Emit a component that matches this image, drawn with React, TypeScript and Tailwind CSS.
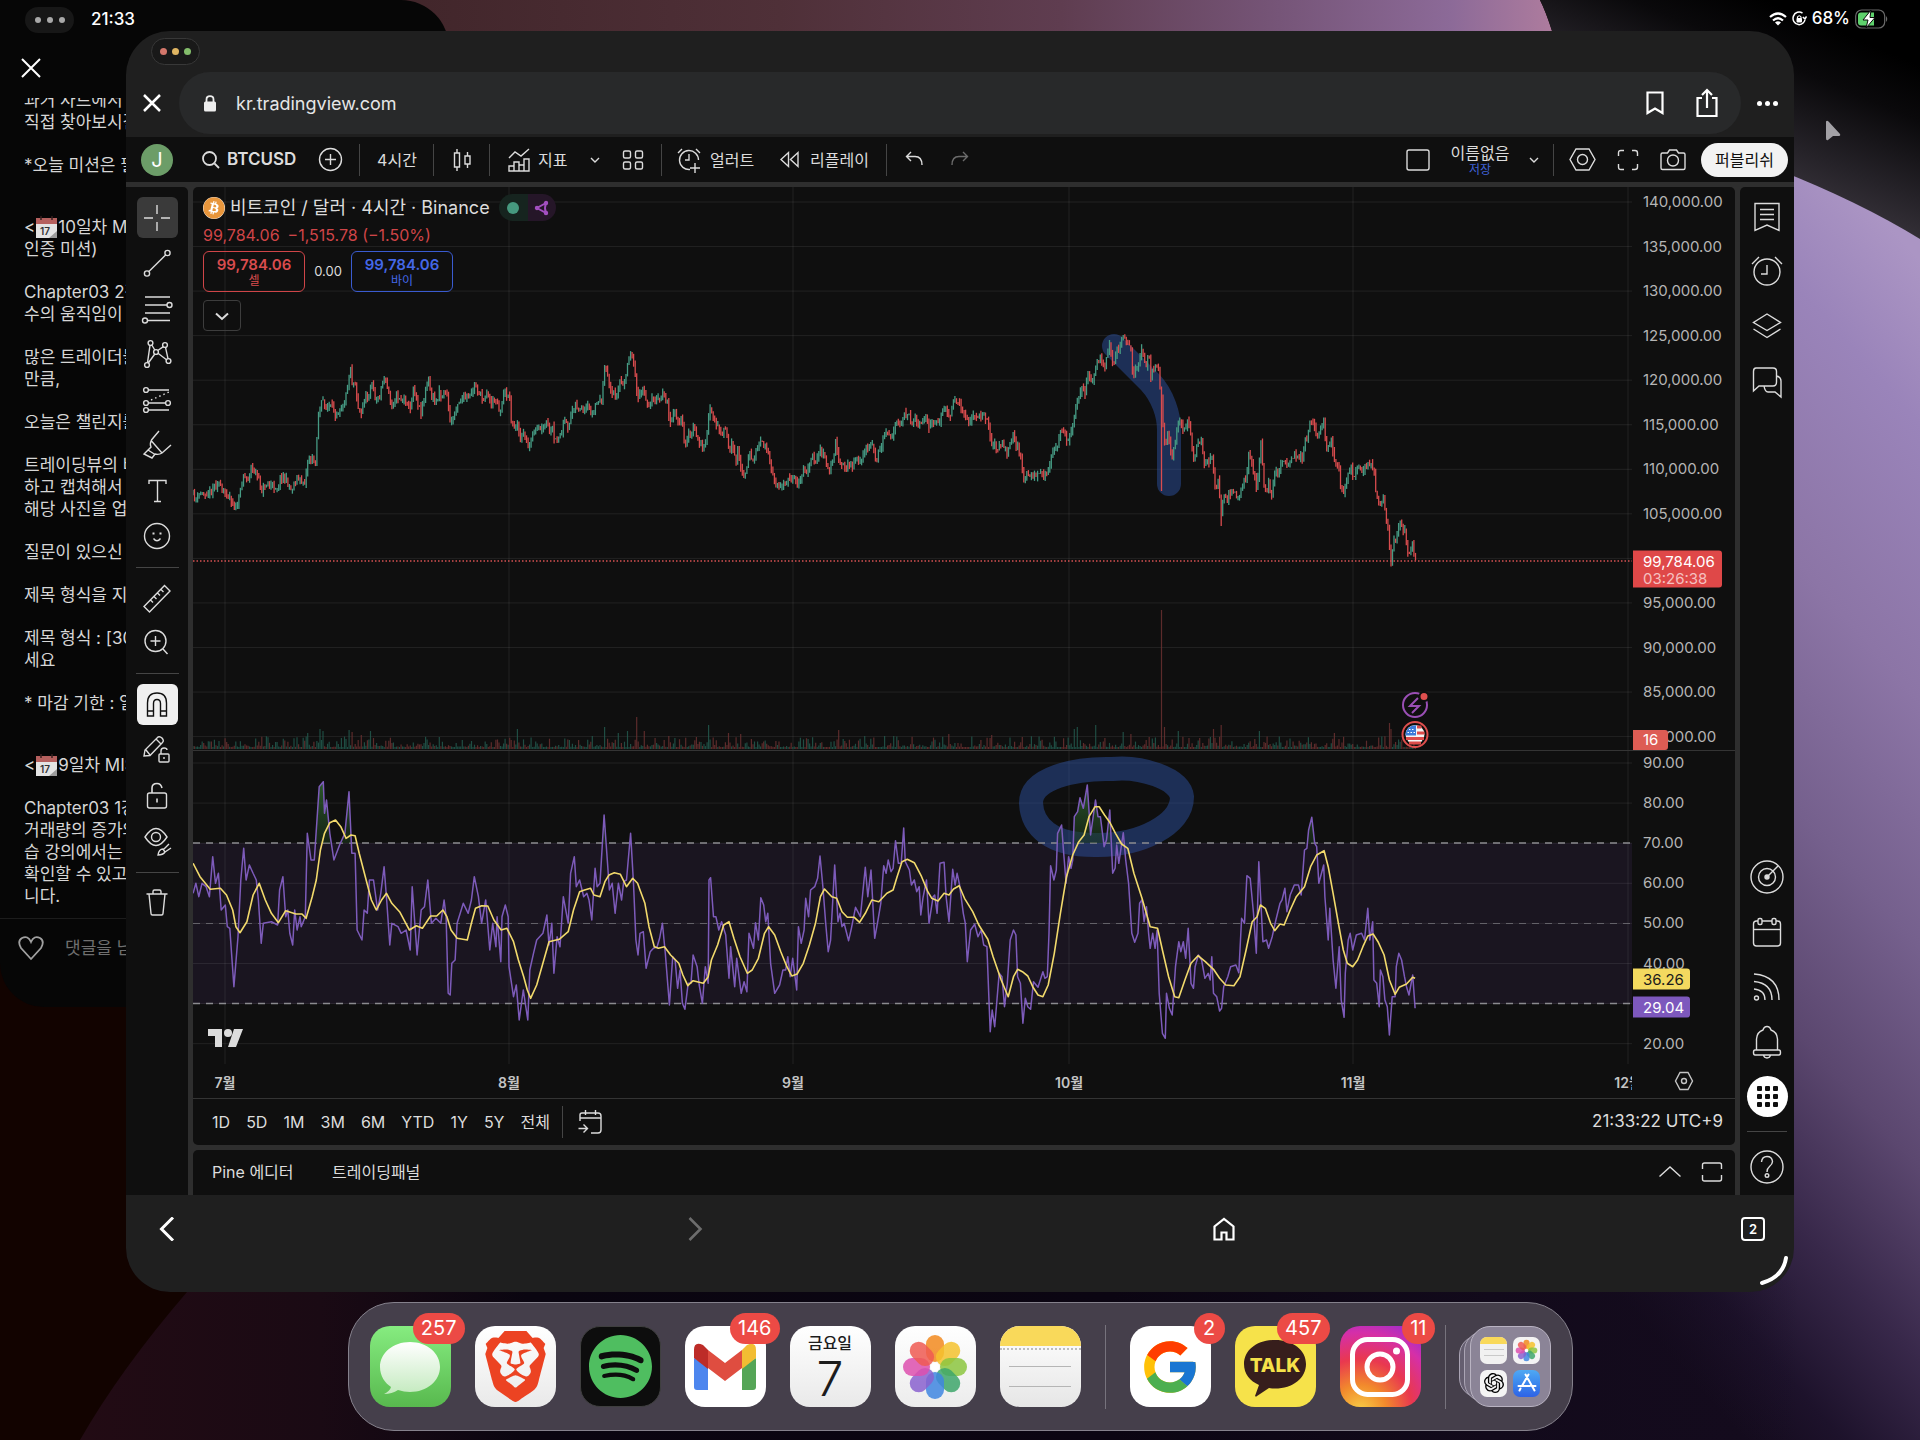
import type { ReactNode } from 'react';
import { FaBitcoin, FaSpotify } from 'react-icons/fa';
import { FcGoogle } from 'react-icons/fc';
import { SiBrave, SiOpenai } from 'react-icons/si';

type Point = [number, number];
type Leg = { ox: number; oy: number; kx: number; ky: number; pts: number[] };

// Plot area in chart units
const X0 = 193;
const Y0 = 187;
const W = 1439;
const H = 877;

// Series are stored in legs; every leg has its own origin and scale
const PRICE: Leg[] = [
  {
    ox: 190, oy: 300, kx: 3, ky: 3,
    pts: [10,585,20,598,30,580,60,580,72,555,85,548,95,575,105,575,120,590,138,630,150,580,160,522,172,542,182,503,195,515,205,540,213,572,225,556,262,560,278,522,290,545,303,568,320,538,345,545,355,468,365,480,377,482,385,345,398,298,408,325,425,320,435,342,460,310,470,280,481,195,487,252,495,240,503,320,514,345,522,300,535,290,545,250,558,300,568,290,582,227,592,260,603,315,615,290,650,300,660,336,670,264,692,336,703,290,715,244,727,295,740,305,748,268,755,300,763,262,772,285,780,370,790,350,800,310,815,295,840,295,855,254,870,280,878,303,890,272,905,312,918,290,930,340,940,285,957,278,965,370,975,390,980,352,990,422,1000,402,1018,446,1030,400,1045,385,1058,390,1068,363,1082,400,1087,380,1093,428,1105,405,1115,405,1122,363,1135,385,1145,332,1155,312,1175,340,1195,325,1210,345,1217,307,1235,300,1245,195,1255,230,1265,288,1280,275,1290,242,1300,265,1312,190,1323,155,1335,210,1343,308,1357,267,1370,316,1385,300,1405,300,1420,282,1432,310,1442,376,1457,327,1465,378,1473,357,1485,430,1497,402],
  },
  {
    ox: 640, oy: 0, kx: 2.45, ky: 3,
    pts: [122,1315,130,1288,140,1310,153,1348,162,1325,170,1220,180,1265,195,1290,215,1300,218,1385,226,1322,235,1388,240,1342,250,1430,258,1420,268,1352,278,1393,287,1350,300,1322,313,1350,320,1388,330,1445,342,1470,352,1450,365,1440,377,1432,387,1450,400,1420,415,1410,418,1372,430,1385,442,1347,455,1385,465,1418,480,1328,490,1390,513,1402,530,1380,545,1378,553,1342,565,1340,568,1327,578,1382,590,1350,598,1307,615,1308,630,1262,640,1268,648,1238,660,1255,690,1268,702,1252,710,1282,720,1262,730,1280,740,1227,750,1230,758,1262,768,1207,780,1212,795,1235,803,1265,818,1245,845,1255,855,1270,860,1342,870,1330,878,1353,887,1325,900,1362,913,1307,925,1340,935,1375,938,1436,950,1425,1000,1420,1010,1352,1020,1350,1028,1292,1040,1295,1045,1323,1060,1285,1068,1220,1080,1167,1090,1180,1097,1127,1107,1153],
  },
  {
    ox: 1000, oy: 300, kx: 3, ky: 3,
    pts: [283,225,290,185,300,175,315,205,328,132,338,193,350,160,370,107,380,135,392,130,397,218,410,200,425,152,437,195,447,162,452,228,462,200,475,202,480,280,485,300,490,390,495,448,502,395,515,476,525,430,532,380,540,352,548,385,555,395,565,357,573,400,582,488,590,430,605,430,612,480,620,495,635,465,645,560,655,540,663,640,670,590,680,600,695,580,717,590,730,532,738,540,745,472,755,482,770,568,778,480,782,425,787,480,790,556,802,578,805,547,815,578,825,517,835,515,845,495,855,477,862,503,885,470,908,470,915,412,922,420,928,372,937,355,948,395,958,403,970,362,980,440,995,422,1005,500,1015,490,1022,560,1032,592,1042,522,1055,502,1058,528,1070,510,1098,510,1108,492,1120,507,1128,578,1138,600,1140,620,1150,592,1157,658,1165,690,1170,770,1175,790,1180,722,1188,735,1197,668,1207,685,1215,692,1225,758,1237,722,1247,780],
  },
];

const RSI: Leg[] = [
  {
    ox: 0, oy: 480, kx: 2.45, ky: 3,
    pts: [473,1240,480,1210,487,1250,495,1210,505,1220,513,1250,521,1130,528,1210,535,1180,542,1290,552,1275,557,1340,563,1345,573,1520,583,1370,590,1200,597,1105,603,1200,611,1155,620,1180,628,1200,633,1260,640,1390,645,1330,665,1325,680,1335,685,1230,693,1190,700,1310,705,1290,710,1360,717,1395,722,1290,728,1350,735,1310,738,1340,748,1310,753,1060,762,1140,770,1140,782,920,792,905,795,1000,800,960,808,1060,818,1140,832,1095,845,1060,855,935,862,1120,870,1120,875,1350,887,1380,892,1290,900,1300,905,1200,915,1200,925,1290,933,1240,941,1160,948,1270,955,1395,960,1330,975,1340,983,1360,995,1350,1005,1410,1010,1220,1022,1425,1032,1290,1040,1280,1048,1200,1057,1330,1068,1315,1080,1330,1088,1260,1093,1310,1098,1540,1103,1545,1107,1450,1115,1440,1120,1330,1135,1270,1147,1300,1155,1260,1162,1190,1172,1250,1180,1330,1190,1260,1200,1410,1207,1330,1215,1400,1218,1310,1227,1445,1230,1310,1238,1275,1245,1310,1247,1460,1258,1550,1265,1515,1272,1620,1282,1530,1293,1620,1298,1470,1307,1420,1315,1380,1330,1360,1340,1305,1345,1395,1352,1330,1357,1480,1365,1370,1372,1400,1380,1250,1392,1330,1398,1180,1407,1130,1412,1220,1420,1200,1430,1250,1438,1240,1443,1260,1450,1320,1458,1165,1463,1220,1470,1210,1480,1005,1488,1140,1493,1230,1500,1210,1507,1300,1515,1210,1523,1260,1528,1205,1535,1200,1545,1060,1552,1210,1558,1380,1563,1425],
  },
  {
    ox: 640, oy: 700, kx: 2.45, ky: 3,
    pts: [0,700,8,695,15,805,25,755,33,745,42,740,48,715,55,670,62,760,72,915,80,770,86,780,92,865,98,810,104,910,110,928,118,850,125,850,130,765,140,800,145,855,153,910,160,800,167,850,169,540,173,533,180,650,186,650,193,690,200,665,210,705,218,835,222,740,232,860,237,775,248,880,255,845,262,875,267,700,278,745,283,668,290,720,296,593,303,615,308,665,313,640,320,790,330,880,342,855,350,810,357,810,362,770,368,830,374,775,384,870,388,680,395,730,402,690,406,595,413,650,418,570,428,560,435,535,441,468,448,560,455,670,461,755,467,720,477,495,485,665,490,640,495,680,500,670,511,722,518,685,528,622,540,650,552,502,558,590,566,510,575,715,583,660,590,610,597,497,603,520,608,480,615,515,620,505,626,422,633,490,640,490,646,384,650,485,660,510,665,555,672,540,678,575,684,560,688,645,693,595,702,540,708,670,718,590,722,585,728,640,735,490,745,487,750,590,757,665,766,508,772,555,777,520,783,555,792,640,797,670,802,785,810,690,820,673,828,710,836,690,842,735,850,740,858,995,863,930,869,980,875,895,880,820,887,830,893,920,900,850,907,720,915,690,921,705,925,830,932,850,938,970,944,895,950,920,957,928,964,845,975,862,987,815,992,835,998,830,1002,700,1006,497,1014,540,1020,510,1023,400,1033,375,1038,460,1044,550,1050,470,1056,505,1060,480,1064,350,1072,335,1078,293,1086,325,1096,255,1104,405,1116,300,1122,350,1128,350,1137,440,1143,420,1151,330,1158,520,1164,505,1168,435,1173,490,1184,398,1190,480,1197,550,1205,700,1212,727,1220,700,1224,610,1230,600,1235,665,1241,620,1246,700,1250,745,1256,700,1262,745,1267,690,1272,880,1280,1000,1287,1015,1290,880,1297,925,1304,945,1312,800,1320,725,1325,755,1331,725,1337,775,1343,685,1350,850,1356,865,1360,800,1368,765,1376,780,1384,835,1392,820,1397,840,1401,770,1405,880,1413,890,1420,933,1425,925,1430,860,1440,830,1447,800,1460,795,1467,818,1474,655,1481,670,1487,527,1495,535,1503,640,1510,760,1516,485,1526,725,1535,720,1540,745,1549,710,1558,660,1568,610],
  },
  {
    ox: 1280, oy: 480, kx: 2.45, ky: 3,
    pts: [5,1260,12,1225,17,1295,25,1245,35,1215,45,1215,52,1245,60,1110,66,1105,70,1050,78,1012,85,1090,90,1100,95,1210,107,1155,110,1250,118,1380,122,1285,130,1440,137,1525,145,1400,150,1560,157,1612,160,1480,167,1380,172,1360,178,1410,187,1365,200,1360,207,1380,215,1285,220,1380,227,1325,230,1500,237,1510,243,1580,246,1470,252,1490,257,1560,263,1580,268,1665,275,1550,282,1550,285,1460,291,1420,298,1440,305,1490,310,1520,316,1545,325,1485,331,1585],
  },
];

const RSI_MA: Leg[] = [
  {
    ox: 0, oy: 480, kx: 2.45, ky: 3,
    pts: [473,1150,490,1190,515,1228,540,1225,555,1245,570,1290,578,1340,588,1358,605,1325,620,1245,635,1210,650,1260,665,1300,682,1328,700,1292,725,1302,740,1302,750,1315,765,1250,775,1200,785,1110,795,1060,808,1028,822,1020,835,1040,848,1075,860,1065,870,1067,880,1120,895,1190,910,1260,922,1290,935,1260,947,1240,960,1270,980,1297,992,1325,1003,1350,1020,1337,1035,1345,1055,1308,1070,1308,1085,1290,1095,1310,1105,1350,1120,1375,1145,1380,1155,1330,1165,1285,1180,1277,1195,1278,1210,1320,1228,1350,1242,1345,1258,1385,1270,1440,1283,1490,1292,1530,1300,1555,1315,1515,1330,1450,1345,1385,1370,1378,1392,1355,1405,1290,1420,1235,1432,1230,1447,1225,1455,1245,1470,1250,1482,1205,1492,1185,1505,1178,1520,1183,1535,1220,1550,1195,1562,1210],
  },
  {
    ox: 640, oy: 700, kx: 2.45, ky: 3,
    pts: [0,570,12,610,22,680,35,740,45,745,60,740,75,765,95,790,105,825,117,857,130,842,155,850,167,830,175,780,190,735,205,675,218,665,230,715,245,770,263,820,275,810,290,775,305,700,315,680,330,705,345,755,360,800,372,828,385,822,400,790,415,735,430,670,442,590,452,567,470,590,482,595,495,635,508,652,525,652,538,667,552,640,568,600,585,605,605,580,620,570,630,530,642,485,655,478,672,488,690,530,705,575,715,595,730,603,745,580,757,585,768,567,782,557,795,595,815,635,830,675,852,718,865,770,885,840,902,890,915,830,925,808,937,815,950,828,962,860,975,885,987,890,1000,855,1015,760,1030,640,1045,530,1060,465,1075,425,1088,405,1100,350,1115,320,1125,320,1138,345,1150,365,1165,400,1180,432,1195,445,1210,520,1230,595,1250,680,1268,685,1280,750,1295,830,1310,890,1320,893,1335,840,1350,790,1367,767,1385,785,1405,808,1420,835,1435,855,1455,857,1470,830,1485,750,1500,665,1512,650,1520,615,1532,625,1545,670,1555,692,1568,672],
  },
  {
    ox: 1280, oy: 480, kx: 2.45, ky: 3,
    pts: [10,1335,25,1290,40,1250,60,1220,75,1160,90,1125,108,1112,118,1160,130,1240,143,1330,155,1410,165,1450,178,1460,190,1440,203,1400,215,1368,228,1362,240,1385,255,1425,268,1500,282,1543,292,1522,310,1512,325,1492,331,1495],
  },
];

const unpack = (legs: Leg[]): Point[] =>
  legs.flatMap(({ ox, oy, kx, ky, pts }) => {
    const out: Point[] = [];
    for (let i = 0; i < pts.length; i += 2) out.push([ox + pts[i] / kx, oy + pts[i + 1] / ky]);
    return out;
  });

const toPath = (pts: Point[]) => 'M' + pts.map(([x, y]) => `${x.toFixed(1)} ${y.toFixed(1)}`).join('L');

const sampler = (pts: Point[]) => (x: number) => {
  let i = 1;
  while (i < pts.length - 1 && pts[i][0] < x) i++;
  const [xa, ya] = pts[i - 1];
  const [xb, yb] = pts[i];
  const t = Math.min(1, Math.max(0, (x - xa) / (xb - xa || 1)));
  return ya + (yb - ya) * t;
};

// Small seeded generator, so the bars never jump between renders
let seed = 11;
const rand = () => {
  seed = (seed * 16807) % 2147483647;
  return seed / 2147483647;
};

const VOLUME_PEAKS: Point[] = [
  [308, 16], [320, 20], [323, 18], [349, 19], [352, 17], [362, 14], [370, 18], [517, 20], [605, 22], [618, 16], [627, 18],
  [636, 32], [645, 18], [669, 13], [709, 24], [729, 16], [740, 15], [838, 19], [884, 13], [949, 15], [991, 14], [1023, 12],
  [1075, 20], [1077, 22], [1096, 24], [1123, 17], [1131, 15], [1162, 139], [1164, 22], [1178, 18], [1214, 20], [1221, 24],
  [1260, 18], [1334, 16], [1389, 26], [1391, 20],
];

const CANDLE_STEP = 1.53;

const candles = (() => {
  const at = sampler(unpack(PRICE));
  const list = [];
  let open = at(X0);
  for (let x = X0; x <= 1416; x += CANDLE_STEP) {
    const close = at(x) + (rand() - 0.5) * 7;
    const volume = 2 + Math.pow(rand(), 3) * 11;
    list.push({ x, open, close, high: Math.min(open, close) - rand() * 5, low: Math.max(open, close) + rand() * 5, volume });
    open = close;
  }
  for (const [px, h] of VOLUME_PEAKS) list[Math.round((px - X0) / CANDLE_STEP)].volume = h;
  // flash crash wick
  list[Math.round((1161.5 - X0) / CANDLE_STEP)].low = 491;
  list[Math.round((1221 - X0) / CANDLE_STEP)].low = 526;
  return list;
})();

const rsiPoints = unpack(RSI);
const rsiPath = toPath(rsiPoints);
const maPath = toPath(unpack(RSI_MA));

const priceTicks = Array.from({ length: 13 }, (_, i) => ({ value: 140000 - i * 5000, y: 202 + i * 44.55 }));
const rsiTicks = Array.from({ length: 8 }, (_, i) => ({ value: 90 - i * 10, y: 763 + i * 40.1 }));
const months = [
  { label: '7월', x: 225 },
  { label: '8월', x: 509 },
  { label: '9월', x: 793 },
  { label: '10월', x: 1069 },
  { label: '11월', x: 1353 },
  { label: '12월', x: 1628 },
];

const pctY = (y: number) => `${((y - Y0) / H) * 100}%`;
const pctX = (x: number) => `${((x - X0) / W) * 100}%`;
const money = (n: number) => n.toLocaleString('en-US', { minimumFractionDigits: 2 });

function Glyph({ size = 34, box = 34, children, className = '' }: { size?: number; box?: number; children: ReactNode; className?: string }) {
  return (
    <svg width={size} height={size} viewBox={`0 0 ${box} ${box}`} fill="none" stroke="currentColor" strokeWidth="1.4" className={`shrink-0 ${className}`} aria-hidden="true">
      {children}
    </svg>
  );
}

function Wallpaper() {
  return (
    <svg className="absolute inset-0 h-full w-full" viewBox="0 0 1920 1440" preserveAspectRatio="none" aria-hidden="true">
      <defs>
        <linearGradient id="w-top" x1="0" x2="1">
          <stop offset="0.22" stopColor="#3f2428" />
          <stop offset="0.5" stopColor="#4f3038" />
          <stop offset="0.68" stopColor="#5f3d50" />
          <stop offset="0.82" stopColor="#765578" />
          <stop offset="0.93" stopColor="#8c6a98" />
          <stop offset="1" stopColor="#b07d9e" />
        </linearGradient>
        <linearGradient id="w-dark" gradientUnits="userSpaceOnUse" x1="1860" y1="40" x2="1780" y2="230">
          <stop offset="0" stopColor="#000" />
          <stop offset="0.25" stopColor="#0a090b" />
          <stop offset="0.6" stopColor="#252228" />
          <stop offset="1" stopColor="#453f48" />
        </linearGradient>
        <linearGradient id="w-purple" x1="0.8" y1="0" x2="0.4" y2="0.88">
          <stop offset="0" stopColor="#ab95c4" />
          <stop offset="0.12" stopColor="#9a84ba" />
          <stop offset="0.32" stopColor="#8c75a6" />
          <stop offset="0.5" stopColor="#75608d" />
          <stop offset="0.66" stopColor="#5b476f" />
          <stop offset="0.8" stopColor="#38284a" />
          <stop offset="0.92" stopColor="#1d122b" />
          <stop offset="1" stopColor="#140b1d" />
        </linearGradient>
        <linearGradient id="w-floor" gradientUnits="userSpaceOnUse" x1="80" y1="0" x2="1800" y2="0">
          <stop offset="0" stopColor="#220b14" />
          <stop offset="0.14" stopColor="#1a0a14" />
          <stop offset="0.26" stopColor="#0a0510" />
          <stop offset="0.6" stopColor="#0b0512" />
          <stop offset="0.82" stopColor="#120a1b" />
          <stop offset="1" stopColor="#140b1d" stopOpacity="0" />
        </linearGradient>
      </defs>
      <rect width="1920" height="1440" fill="#120300" />
      <path d="M0 0H1540Q1546 12 1552 31L1560 60H0Z" fill="url(#w-top)" />
      <path d="M1540 0H1920V320H1600L1552 31Q1546 12 1540 0Z" fill="url(#w-dark)" />
      <path d="M1700 142Q1830 184 1920 239V1440H1400V142Z" fill="url(#w-purple)" />
      <path d="M187 1292Q120 1370 80 1440H1800V1280H200Z" fill="url(#w-floor)" />
    </svg>
  );
}

function StatusBar() {
  return (
    <header className="relative flex h-[31px] items-end justify-between pl-[25px] pr-[32px] text-[17px] font-medium text-white">
      <div className="-mb-[2px] flex items-center gap-[17px]">
        <div className="flex h-[26px] w-[49px] items-center justify-center gap-[6px] rounded-full bg-[#171717]">
          <span className="size-[6px] rounded-full bg-[#a9a9a9]" />
          <span className="size-[6px] rounded-full bg-[#a9a9a9]" />
          <span className="size-[6px] rounded-full bg-[#a9a9a9]" />
        </div>
        <span>21:33</span>
      </div>
      <div className="flex h-6 items-center gap-[5px]">
        <svg width="18" height="14" viewBox="0 0 18 14" aria-hidden="true">
          <g fill="none" stroke="#fff" strokeWidth="2.2">
            <path d="M1 5Q9 -2 17 5" />
            <path d="M4 8.500Q9 4 14 8.500" />
          </g>
          <path d="M9 13.500L6 10.500Q9 8 12 10.500Z" fill="#fff" />
        </svg>
        <svg width="15" height="16" viewBox="0 0 15 16" aria-hidden="true">
          <path d="M10.500 2.200A6 6.300 0 1 0 13 6.500M14.500 5.500L13 8L10.800 6" fill="none" stroke="#fff" strokeWidth="1.500" />
          <rect x="4.500" y="7" width="5.500" height="4.500" rx="1" fill="#fff" />
          <path d="M5.500 7.500V6Q7.200 3.500 9 6V7.500" fill="none" stroke="#fff" strokeWidth="1.200" />
        </svg>
        <span>68%</span>
        <svg width="33" height="20" viewBox="0 0 33 20" aria-hidden="true">
          <rect x="0.700" y="1" width="29" height="18" rx="6" fill="none" stroke="#6b6b6b" strokeWidth="1.200" />
          <path d="M6 3.500H19V16.500H6Q3 16.500 3 13.500V6.500Q3 3.500 6 3.500Z" fill="#5ed16c" />
          <path d="M31 7V13Q33.500 10 31 7Z" fill="#6b6b6b" />
          <path d="M16 1L8 11H13L11 19L20 8.500H15Z" fill="#fff" stroke="#0a0a0a" strokeWidth="1" />
        </svg>
      </div>
    </header>
  );
}

function CalendarEmoji() {
  return (
    <svg width="21" height="22" viewBox="0 0 21 22" className="mx-px inline-block align-top" aria-hidden="true">
      <path d="M0 2H21V22H0Z" fill="#e3e3e3" />
      <path d="M0 2H21V8H0Z" fill="#b5605e" />
      <path d="M5 0V4M16 0V4" stroke="#3a2020" strokeWidth="1.500" />
      <path d="M21 15V22H13Z" fill="#9b9b9b" />
      <text x="4" y="19" fontSize="10" fontWeight="600" fill="#333">17</text>
    </svg>
  );
}

const NOTES: { lines: ReactNode[]; far?: boolean }[] = [
  { lines: ['과거 차트에서', '직접 찾아보시길'] },
  { lines: ['*오늘 미션은 필수'], far: true },
  { lines: [<><span>&lt;</span><CalendarEmoji />10일차 MISSION</>, '인증 미션)'] },
  { lines: ['Chapter03 2강', '수의 움직임이 '] },
  { lines: ['많은 트레이더들', '만큼,'] },
  { lines: ['오늘은 챌린지를'] },
  { lines: ['트레이딩뷰의 비', '하고 캡쳐해서 ', '해당 사진을 업로드'] },
  { lines: ['질문이 있으신 분'] },
  { lines: ['제목 형식을 지켜'] },
  { lines: ['제목 형식 : [30일', '세요'] },
  { lines: ['* 마감 기한 : 일요일'], far: true },
  { lines: [<><span>&lt;</span><CalendarEmoji />9일차 MISSION</>] },
  { lines: ['Chapter03 1강', '거래량의 증가와', '습 강의에서는 ', '확인할 수 있고', '니다.'] },
];

function NotesWindow() {
  return (
    <aside className="absolute left-0 top-0 flex h-[1007px] w-[449px] flex-col overflow-hidden rounded-bl-[44px] rounded-tr-[48px] bg-[#060606] text-[17px] leading-[22px] text-[#d6d6d6]">
      <button className="ml-[19px] mt-[56px] w-6 text-white" aria-label="닫기">
        <Glyph size={24} box={24}>
          <path d="M3 3L21 21M21 3L3 21" strokeWidth="2" />
        </Glyph>
      </button>
      <article className="mt-[18px] h-[820px] shrink-0 overflow-hidden pl-6">
        <div className="-mt-[9px]">
          {NOTES.map((note, i) => (
            <p key={i} className={note.far ? 'mb-[40px]' : 'mb-[21px]'}>
              {note.lines.map((line, j) => (
                <span key={j} className="block h-[22px] whitespace-nowrap">{line}</span>
              ))}
            </p>
          ))}
        </div>
      </article>
      <div className="flex items-center gap-[21px] border-t border-[#1c1c1c] pl-[18px] pt-[16px] text-[#6f6f6f]">
        <Glyph size={26} box={26} className="text-[#a0a0a0]">
          <path d="M13 24L3 13Q-1 6 4 3Q10 0 13 7Q16 0 22 3Q27 6 23 13Z" strokeWidth="1.800" />
        </Glyph>
        <span className="whitespace-nowrap">댓글을 남겨주세요</span>
      </div>
    </aside>
  );
}

function Separator() {
  return <span className="h-[32px] w-px shrink-0 bg-[#454545]" />;
}

function BrowserHeader() {
  return (
    <div className="bg-[#1f1f1f]">
      <div className="flex h-[41px] items-start pl-[25px] pt-[7px]">
        <div className="flex h-[27px] w-[49px] items-center justify-center gap-[5px] rounded-full border border-[#383838] bg-[#191919]">
          <span className="size-[7px] rounded-full bg-[#d4776b]" />
          <span className="size-[7px] rounded-full bg-[#e0b562]" />
          <span className="size-[7px] rounded-full bg-[#83bd6b]" />
        </div>
      </div>
      <div className="flex h-[65px] items-center pb-[3px]">
        <button className="ml-[15px] w-[22px] text-white" aria-label="탭 닫기">
          <Glyph size={22} box={22}>
            <path d="M3 3L19 19M19 3L3 19" strokeWidth="2.500" />
          </Glyph>
        </button>
        <div className="ml-[16px] flex h-[62px] flex-1 items-center rounded-full bg-[#28292a] pl-[24px] pr-[19px] text-white">
          <svg width="14" height="17" viewBox="0 0 14 17" aria-hidden="true">
            <rect x="1" y="6.500" width="12" height="10" rx="1.500" fill="#eee" />
            <path d="M3.500 7V4.500Q3.500 1.200 7 1.200T10.500 4.500V7" fill="none" stroke="#eee" strokeWidth="1.800" />
          </svg>
          <input className="ml-[19px] flex-1 bg-transparent text-[18px] text-[#e6e6e6] outline-none" aria-label="주소" defaultValue="kr.tradingview.com" />
          <button aria-label="북마크">
            <Glyph size={30} box={30}>
              <path d="M7.500 4.500H22.500V25L15 20.500L7.500 25Z" strokeWidth="2.200" />
            </Glyph>
          </button>
          <button className="ml-[22px]" aria-label="공유">
            <Glyph size={30} box={30}>
              <path d="M10 10H5.500V28H24.500V10H20M15 20V2.500M10 7L15 2L20 7" strokeWidth="2.200" />
            </Glyph>
          </button>
        </div>
        <button className="ml-[15px] mr-[16px] flex w-[22px] justify-center gap-[3px]" aria-label="더보기">
          <span className="size-[5px] rounded-full bg-white" />
          <span className="size-[5px] rounded-full bg-white" />
          <span className="size-[5px] rounded-full bg-white" />
        </button>
      </div>
    </div>
  );
}

function TopToolbar() {
  return (
    <div className="flex h-[45px] items-center bg-[#0f0f0f] text-base text-[#dcdcdc]">
      <button className="ml-[15px] size-8 rounded-full bg-[#6c9d68] text-[20px] leading-8 text-white">J</button>
      <button className="ml-[28px] flex w-[97px] items-center gap-[6px] text-[17px] font-semibold">
        <Glyph size={20} box={20}>
          <circle cx="8.500" cy="8.500" r="6.500" strokeWidth="1.800" />
          <path d="M13.500 13.500L18 18" strokeWidth="1.800" />
        </Glyph>
        BTCUSD
      </button>
      <button className="ml-[20px]" aria-label="심볼 비교">
        <Glyph size={25} box={25}>
          <circle cx="12.500" cy="12.500" r="11" />
          <path d="M12.500 7V18M7 12.500H18" />
        </Glyph>
      </button>
      <span className="w-[16px]" />
      <Separator />
      <button className="ml-[17px] w-[40px] whitespace-nowrap">4시간</button>
      <span className="w-[16px]" />
      <Separator />
      <button className="ml-[16px]" aria-label="캔들">
        <Glyph size={24} box={24}>
          <path d="M4.500 5H9.500V19H4.500ZM7 1V5M7 19V23M15 8H20V16H15ZM17.500 4V8M17.500 16V20" />
        </Glyph>
      </button>
      <span className="w-[15px]" />
      <Separator />
      <button className="ml-[17px] flex w-[62px] items-center gap-[7px] whitespace-nowrap">
        <Glyph size={24} box={24}>
          <path d="M2 10L8 4L14 8L22 1M2 23V18H7V23ZM7 23V14H12V23M12 17H17V23M17 23V11H22V23ZM2 23H22" />
        </Glyph>
        지표
      </button>
      <button className="ml-[18px]" aria-label="지표 즐겨찾기">
        <Glyph size={16} box={16}>
          <path d="M4 6L8 10L12 6" />
        </Glyph>
      </button>
      <button className="ml-[18px]" aria-label="템플릿">
        <Glyph size={24} box={24}>
          <rect x="2.500" y="3" width="7" height="7" rx="1.500" />
          <rect x="14.500" y="3" width="7" height="7" rx="1.500" />
          <rect x="2.500" y="14" width="7" height="7" rx="1.500" />
          <rect x="14.500" y="14" width="7" height="7" rx="1.500" />
        </Glyph>
      </button>
      <span className="w-[16px]" />
      <Separator />
      <button className="ml-[14px] flex w-[79px] items-center gap-[8px] whitespace-nowrap">
        <Glyph size={26} box={26}>
          <path d="M14 22.500A9.500 9.500 0 1 1 22.500 13M13 7V13H9M19 16V26M14 21H24M2 6L6 2M20 2L24 6" />
        </Glyph>
        얼러트
      </button>
      <button className="ml-[23px] flex w-[91px] items-center gap-[9px] whitespace-nowrap">
        <Glyph size={23} box={23}>
          <path d="M10.500 4.500V18.500L3 11.500ZM20 4.500V18.500L12.500 11.500Z" />
        </Glyph>
        리플레이
      </button>
      <span className="w-[17px]" />
      <Separator />
      <button className="ml-[16px]" aria-label="실행취소">
        <Glyph size={23} box={23}>
          <path d="M8 4L3.500 8.500L8 13M3.500 8.500H12Q19 8.500 19 17" />
        </Glyph>
      </button>
      <button className="ml-[22px] text-[#6b6b6b]" aria-label="다시실행">
        <Glyph size={23} box={23}>
          <path d="M15 4L19.500 8.500L15 13M19.500 8.500H11Q4 8.500 4 17" />
        </Glyph>
      </button>
      <div className="ml-auto flex items-center">
        <button aria-label="레이아웃">
          <Glyph size={26} box={26}>
            <rect x="2" y="3" width="22" height="20" rx="2" />
          </Glyph>
        </button>
        <button className="ml-[18px] w-[62px] whitespace-nowrap pt-px text-center leading-[20px]">
          이름없음
          <span className="block text-[12px] leading-[14px] text-[#3f62d8]">저장</span>
        </button>
        <button className="ml-[15px] mr-[11px]" aria-label="레이아웃 메뉴">
          <Glyph size={16} box={16}>
            <path d="M4 6L8 10L12 6" />
          </Glyph>
        </button>
        <Separator />
        <button className="ml-[15px]" aria-label="설정">
          <Glyph size={27} box={27}>
            <path d="M7 3H20L26 13.500L20 24H7L1 13.500Z" />
            <circle cx="13.500" cy="13.500" r="5" />
          </Glyph>
        </button>
        <button className="ml-[20px]" aria-label="전체화면">
          <Glyph size={24} box={24}>
            <path d="M2.500 8V5Q2.500 2.500 5 2.500H8M16 2.500H19Q21.500 2.500 21.500 5V8M21.500 16V19Q21.500 21.500 19 21.500H16M8 21.500H5Q2.500 21.500 2.500 19V16" />
          </Glyph>
        </button>
        <button className="ml-[19px]" aria-label="스냅샷">
          <Glyph size={28} box={28}>
            <path d="M3.500 7H8.500L10.500 4H17.500L19.500 7H24.500Q26 7 26 8.500V22Q26 23.500 24.500 23.500H3.500Q2 23.500 2 22V8.500Q2 7 3.500 7Z" />
            <circle cx="14" cy="14.500" r="5.500" />
          </Glyph>
        </button>
        <button className="ml-[14px] mr-[6px] h-[34px] w-[87px] whitespace-nowrap rounded-full bg-[#f2f2f2] text-[#0f0f0f]">퍼블리쉬</button>
      </div>
    </div>
  );
}

type Tool = { label: string; art: ReactNode; active?: 'dark' | 'light' };

const DRAW_TOOLS: Tool[] = [
  { label: '십자선', active: 'dark', art: <path d="M17 4V13M17 21V30M4 17H13M21 17H30" /> },
  { label: '추세선', art: <><circle cx="27.500" cy="7" r="2.600" /><circle cx="7" cy="27.500" r="2.600" /><path d="M25.600 8.900L8.900 25.600" /></> },
  { label: '피보나치', art: <><path d="M5 5H30M5 13H27M5 21H30M8 28.500H30" /><circle cx="29.500" cy="13" r="2.500" /><circle cx="5" cy="28.500" r="2.500" /></> },
  { label: '패턴', art: <><circle cx="10.500" cy="6" r="2.400" /><circle cx="25" cy="8" r="2.400" /><circle cx="16" cy="15" r="2.400" /><circle cx="7" cy="28" r="2.400" /><circle cx="28.500" cy="24" r="2.400" /><path d="M10 8.400L7.500 25.600M11.800 8L14.800 13M18 16.300L26.500 22.700M14.800 17L8.300 26M23.300 9.700L17.800 13.500M25.500 10.400L28 21.600" /></> },
  { label: '예측', art: <><path d="M8 7H29M8 20H25M8 27H29" /><circle cx="6" cy="7" r="2.400" /><circle cx="6" cy="20" r="2.400" /><circle cx="28" cy="20" r="2.400" /><circle cx="6" cy="27" r="2.400" /><path d="M11 17L29 9" strokeDasharray="1.500 3" /></> },
  { label: '브러쉬', art: <path d="M19 3L11.500 12Q9.500 16 11 19L4 26L12 30L15 26Q19 27 22 25L31 17M11.500 13L22 25M8 22L15 26.500" /> },
  { label: '텍스트', art: <path d="M9 10V6.500H26V10M17.500 6.500V27M14 27.500H21" /> },
  { label: '이모지', art: <><circle cx="17" cy="17" r="12.500" /><path d="M13.500 19.500Q17 24 20.500 19.500" /><path d="M13.500 13.500V15.500M20.500 13.500V15.500" strokeWidth="2" /></> },
];

const MEASURE_TOOLS: Tool[] = [
  { label: '측정', art: <path d="M24.500 3.500L30 9L9.500 30L4 24.500ZM21 7.500L23.500 10M17.500 11L20 13.500M14 14.500L16.500 17M10.500 18L13 20.500" /> },
  { label: '확대', art: <><circle cx="15.500" cy="15" r="10.500" /><path d="M15.500 10V20M10.500 15H20.500M23 23L27.500 28" /></> },
];

const LOCK_TOOLS: Tool[] = [
  { label: '자석', active: 'light', art: <path d="M7.500 28V15Q7.500 5 17 5T26.500 15V28H20.500V15.500Q20.500 11.500 17 11.500T13.500 15.500V28ZM7.500 23H13.500M20.500 23H26.500" /> },
  { label: '그리기 유지', art: <><path d="M4 23L5 17L18 4Q20 3 22 5L23 6.500Q24 8 22.500 9.500L10 22.500ZM16 6L21 11M6 17L10 22" /><rect x="19" y="21" width="10" height="8" rx="1" /><path d="M21 21V18Q21 15 24 15T27 17M24 24V26" /></> },
  { label: '드로잉 잠금', art: <><rect x="7.500" y="14" width="19" height="15" rx="2" /><path d="M12 14V9Q12 4.500 17 4.500Q21 4.500 22 9M17 19.500V23.500" strokeWidth="1.600" /></> },
  { label: '숨기기', art: <><path d="M5 13Q16 -4 27 13Q16 30 5 13Z" /><circle cx="16" cy="13" r="4.500" /><path d="M18 31Q19 25 23 25L25 28Q23 31 18 31ZM24 25L29 20M25 28L31 24" /></> },
];

function ToolButton({ tool }: { tool: Tool }) {
  const tone = tool.active === 'dark' ? 'bg-[#3a3a3a]' : tool.active === 'light' ? 'bg-[#f0f0f0] text-[#0f0f0f]' : '';
  return (
    <button className={`flex size-[41px] shrink-0 items-center justify-center rounded-[6px] ${tone}`} aria-label={tool.label}>
      <Glyph>{tool.art}</Glyph>
    </button>
  );
}

function DrawingRail() {
  return (
    <nav className="flex w-[62px] shrink-0 flex-col items-center gap-[10px] rounded-tr-[5px] bg-[#0f0f0f] pt-[10px] text-[#dcdcdc]">
      <div className="flex h-[360px] flex-col justify-between">
        {DRAW_TOOLS.map(t => <ToolButton key={t.label} tool={t} />)}
      </div>
      <span className="h-px w-[43px] bg-[#454545]" />
      <div className="flex h-[85px] flex-col justify-between">
        {MEASURE_TOOLS.map(t => <ToolButton key={t.label} tool={t} />)}
      </div>
      <span className="h-px w-[43px] bg-[#454545]" />
      <div className="flex h-[178px] flex-col justify-between">
        {LOCK_TOOLS.map(t => <ToolButton key={t.label} tool={t} />)}
      </div>
      <span className="h-px w-[43px] bg-[#454545]" />
      <ToolButton tool={{ label: '삭제', art: <path d="M6.500 7H27.500M13 7V4.500Q13 3 14.500 3H19.500Q21 3 21 4.500V7M9 7L11 26.500Q11 28 12.500 28H21.500Q23 28 23 26.500L25 7" /> }} />
    </nav>
  );
}

const SIDE_TOP: Tool[] = [
  { label: '관심종목', art: <path d="M5 3.500H29V30.500L17 25L5 30.500ZM10 9.500H24M10 14.500H24M10 19.500H24" /> },
  { label: '얼러트', art: <><circle cx="17" cy="17" r="13" /><path d="M17 10V19H11M2 9L9 2M25 2L32 9" /></> },
  { label: '오브젝트', art: <path d="M17 4L30.500 12.500L17 20.500L3.500 12.500ZM3.500 19L17 27.500L30.500 19" /> },
  { label: '채팅', art: <path d="M6 3H23Q26.500 3 26.500 6.500V17Q26.500 21 23 21H9L3.500 26V6.500Q3.500 3 6 3ZM26.500 11Q31 12 31 16V32L25 27H18Q15 27 14 21" /> },
];

const SIDE_BOTTOM: Tool[] = [
  { label: '스크리너', art: <><circle cx="17" cy="17" r="16" /><circle cx="17" cy="17" r="8.500" /><circle cx="17" cy="17" r="2" fill="currentColor" /><path d="M17 17L28 6" /></> },
  { label: '캘린더', art: <><rect x="3.500" y="6" width="27" height="25" rx="3" /><path d="M3.500 14.500H30.500" /><rect x="8" y="3.500" width="4" height="6" rx="1.500" fill="#0f0f0f" /><rect x="22" y="3.500" width="4" height="6" rx="1.500" fill="#0f0f0f" /></> },
  { label: '뉴스', art: <><circle cx="6.500" cy="28" r="2" /><path d="M4 4Q29 6 29 30M4 11.500Q22 13 22 30M4 19Q15 20 15 30" /></> },
  { label: '알림', art: <path d="M6.500 25V14Q7 7 13 5Q14 1.500 17 1.500T21 5Q27 7 27.500 14V25M5 25H29Q30.500 25 30.500 27.500T29 30H5Q3.500 30 3.500 27.500T5 25ZM13.500 30Q14 33 17 33T20.500 30" /> },
];

function SideRail() {
  return (
    <nav className="flex w-[54px] shrink-0 flex-col items-center gap-[14px] rounded-tl-[5px] bg-[#0f0f0f] pb-[8px] pt-[9px] text-[#dcdcdc]">
      {SIDE_TOP.map(t => <ToolButton key={t.label} tool={t} />)}
      <span className="flex-1" />
      {SIDE_BOTTOM.map(t => <ToolButton key={t.label} tool={t} />)}
      <button className="flex size-[41px] shrink-0 items-center justify-center rounded-full bg-white" aria-label="제품">
        <span className="grid grid-cols-3 gap-[3px]">
          {Array.from({ length: 9 }, (_, i) => <span key={i} className="size-[5px] rounded-[1px] bg-[#0f0f0f]" />)}
        </span>
      </button>
      <span className="h-px w-[40px] shrink-0 bg-[#454545]" />
      <ToolButton tool={{ label: '도움말', art: <><circle cx="17" cy="17" r="16" /><path d="M11.500 12Q12 6.500 17 6.500T22.500 11.500Q22.500 14 19.500 16.500Q17 18.500 17 22" /><circle cx="17" cy="25.500" r="1.800" /></> }} />
    </nav>
  );
}

function ChartDrawing() {
  return (
    <svg className="absolute inset-0 h-full w-full" viewBox={`${X0} ${Y0} ${W} ${H}`} preserveAspectRatio="none" aria-label="BTCUSD 차트">
      <defs>
        <clipPath id="above70">
          <rect x={X0} y="751" width={W} height="92" />
        </clipPath>
        <linearGradient id="hot" x1="0" y1="760" x2="0" y2="843" gradientUnits="userSpaceOnUse">
          <stop offset="0" stopColor="#3f8a3f" stopOpacity="0.8" />
          <stop offset="1" stopColor="#1d3a1d" stopOpacity="0.5" />
        </linearGradient>
      </defs>
      <rect x={X0} y="843" width={W} height="161" fill="#1a1520" />
      <g stroke="#ffffff" strokeOpacity="0.08">
        {priceTicks.map(t => <path key={t.value} d={`M${X0} ${t.y}H1632`} />)}
        {rsiTicks.map(t => <path key={t.value} d={`M${X0} ${t.y}H1632`} />)}
        {months.map(m => <path key={m.label} d={`M${m.x} ${Y0}V1064`} />)}
      </g>

      {/* hand-drawn marks */}
      <g fill="none" stroke="#2c4f9e" strokeOpacity="0.5" strokeLinecap="round">
        <path d="M1114 346C1128 360 1140 372 1150 382C1163 396 1169 415 1169 430V484" strokeWidth="24" />
        <path d="M1112 769C1075 768 1031 778 1031 803C1032 826 1050 846 1098 845C1140 845 1182 825 1182 797C1180 778 1140 766 1112 769Z" strokeWidth="24" />
      </g>

      {candles.map(({ x, volume, open, close }) => (
        <path key={x} d={`M${x.toFixed(1)} 749V${(749 - volume).toFixed(1)}`} stroke={close < open ? '#235c50' : '#6f3232'} strokeOpacity="0.8" strokeWidth="1.200" />
      ))}
      <path d={`M${X0} 561H1632`} stroke="#d65152" strokeWidth="1.500" strokeDasharray="1.500 2" />
      {candles.map(({ x, open, close, high, low }) => (
        <path key={x} d={`M${x.toFixed(1)} ${high.toFixed(1)}V${low.toFixed(1)}`} stroke={close < open ? '#469b84' : '#d94c4e'} strokeWidth="1.300" />
      ))}

      <g fill="none" stroke="#8b8b8f" strokeDasharray="7 6">
        <path d={`M${X0} 843H1632`} strokeWidth="1.500" />
        <path d={`M${X0} 923.500H1632`} strokeOpacity="0.6" />
        <path d={`M${X0} 1003.500H1632`} strokeWidth="1.300" />
      </g>
      <path d={`${rsiPath}V1010H${X0}Z`} fill="url(#hot)" clipPath="url(#above70)" />
      <path d={rsiPath} fill="none" stroke="#7d5bba" strokeWidth="1.500" strokeLinejoin="round" />
      <path d={maPath} fill="none" stroke="#f2da6c" strokeWidth="1.600" strokeLinejoin="round" />

      <path d="M208 1029H222V1047H215V1036H208ZM234 1029H243L236 1047H228Z" fill="#dcdcdc" />
      <circle cx="228" cy="1033" r="4" fill="#dcdcdc" />

      <g fill="none">
        <circle cx="1415" cy="705" r="12" stroke="#9a4fb5" strokeWidth="2" />
        <path d="M1418 698L1410 706H1419L1412 713" stroke="#9a4fb5" strokeWidth="2" />
        <circle cx="1424" cy="696.500" r="4.500" fill="#df4f4e" stroke="#0f0f0f" strokeWidth="2" />
        <circle cx="1415" cy="734.500" r="12.500" stroke="#df4f4e" strokeWidth="2" />
        <circle cx="1415" cy="734.500" r="9.500" fill="#f5f5f5" />
        <path d="M1417 727H1421.500M1417 733H1424.500M1406 738.500H1424M1409 743H1421" stroke="#dc4c4a" strokeWidth="3" />
        <path d="M1416 725.200A9.500 9.500 0 0 0 1405.600 735.500H1416Z" fill="#3c7bd8" />
        <path d="M1409 729.500H1415M1407.500 732.500H1415" stroke="#fff" strokeDasharray="1.500 1.500" />
      </g>
    </svg>
  );
}

function Legend() {
  return (
    <div className="absolute left-[10px] top-[7px] text-[#dcdcdc]">
      <div className="flex h-[27px] items-center text-[18px]">
        <span className="size-[22px] rounded-full bg-white">
          <FaBitcoin className="size-[22px] text-[#e8963c]" />
        </span>
        <span className="ml-[5px] w-[269px] whitespace-nowrap">비트코인 / 달러 · 4시간 · Binance</span>
        <span className="flex h-[27px] w-[57px] overflow-hidden rounded-full">
          <span className="flex flex-1 items-center justify-center bg-[#16241f]">
            <span className="size-[12px] rounded-full bg-[#46997f]" />
          </span>
          <span className="flex flex-1 items-center justify-center bg-[#251628] text-[#a34fc0]">
            <Glyph size={16} box={16}>
              <path d="M12 3L3 8L12 13M12 3Q10 8 12 13" strokeWidth="2" />
              <circle cx="12" cy="3" r="1.500" fill="currentColor" />
              <circle cx="3" cy="8" r="1.500" fill="currentColor" />
              <circle cx="12" cy="13" r="1.500" fill="currentColor" />
            </Glyph>
          </span>
        </span>
      </div>
      <div className="mt-[4px] flex h-5 items-center gap-[8px] text-base text-[#cf4548]">
        <span>99,784.06</span>
        <span>−1,515.78 (−1.50%)</span>
      </div>
      <div className="mt-[6px] flex items-center">
        <button className="h-[41px] w-[102px] rounded-[6px] border border-[#cf4548] text-[15px] font-semibold leading-[17px] text-[#d94c4e]">
          99,784.06
          <span className="block text-[12px] font-normal leading-[15px]">셀</span>
        </button>
        <span className="w-[46px] text-center text-[13px]">0.00</span>
        <button className="h-[41px] w-[102px] rounded-[6px] border border-[#3a5bd0] text-[15px] font-semibold leading-[17px] text-[#4468e8]">
          99,784.06
          <span className="block text-[12px] font-normal leading-[15px]">바이</span>
        </button>
      </div>
      <button className="mt-[8px] flex h-[31px] w-[38px] items-center justify-center rounded-[4px] border border-[#3d3d3d]" aria-label="지표 접기">
        <Glyph size={16} box={16}>
          <path d="M2 5.500L8 11L14 5.500" strokeWidth="2" />
        </Glyph>
      </button>
    </div>
  );
}

function Scale() {
  return (
    <div className="relative w-[103px] shrink-0 overflow-hidden text-[15px] text-[#b5b5b5]">
      {priceTicks.filter(t => t.value !== 100000).map(t => (
        <span key={t.value} className="absolute left-[11px] -translate-y-1/2" style={{ top: pctY(t.y) }}>{money(t.value)}</span>
      ))}
      {rsiTicks.filter(t => t.value !== 30).map(t => (
        <span key={t.value} className="absolute left-[11px] -translate-y-1/2" style={{ top: pctY(t.y) }}>{money(t.value)}</span>
      ))}
      <div className="absolute left-px flex h-[37px] w-[89px] -translate-y-1/2 flex-col justify-center rounded-r-[3px] bg-[#df4848] pl-[10px] leading-[17px] text-white" style={{ top: pctY(569) }}>
        <span>99,784.06</span>
        <span className="text-[#f5c0c0]">03:26:38</span>
      </div>
      <div className="absolute left-px h-5 w-[35px] -translate-y-1/2 rounded-r-[3px] bg-[#dd5c54] pl-[10px] leading-5 text-white" style={{ top: pctY(740) }}>16</div>
      <div className="absolute left-px h-[21px] w-[57px] -translate-y-1/2 rounded-r-[3px] bg-[#f3d95f] pl-[10px] leading-[21px] text-[#1b1b1b]" style={{ top: pctY(979) }}>36.26</div>
      <div className="absolute left-px h-[21px] w-[57px] -translate-y-1/2 rounded-r-[3px] bg-[#7d58bd] pl-[10px] leading-[21px] text-white" style={{ top: pctY(1007) }}>29.04</div>
    </div>
  );
}

const RANGES = ['1D', '5D', '1M', '3M', '6M', 'YTD', '1Y', '5Y', '전체'];

function ChartPanel() {
  return (
    <section className="flex flex-1 flex-col overflow-hidden rounded-[5px] bg-[#0f0f0f]">
      <div className="relative flex flex-1">
        <div className="relative flex-1">
          <ChartDrawing />
          <Legend />
        </div>
        <Scale />
        <span className="absolute inset-x-0 h-px bg-[#343434]" style={{ top: pctY(750) }} />
      </div>
      <div className="flex h-[34px] items-center text-[14px] font-semibold text-[#c4c4c4]">
        <div className="relative h-full flex-1 overflow-hidden">
          {months.map(m => (
            <span key={m.label} className="absolute top-[8px] -translate-x-1/2 whitespace-nowrap" style={{ left: pctX(m.x) }}>{m.label}</span>
          ))}
        </div>
        <div className="flex w-[103px] justify-center">
          <button aria-label="축 설정">
            <Glyph size={20} box={20}>
              <path d="M6 1.500H14L18.500 10L14 18.500H6L1.500 10Z" />
              <circle cx="10" cy="10" r="2.500" />
            </Glyph>
          </button>
        </div>
      </div>
      <div className="flex h-[47px] items-center border-t border-[#343434] pl-[19px] pr-[12px] text-base text-[#dcdcdc]">
        <div className="flex w-[338px] justify-between">
          {RANGES.map(r => <button key={r} className="whitespace-nowrap">{r}</button>)}
        </div>
        <span className="w-[12px]" />
        <Separator />
        <button className="ml-[14px]" aria-label="날짜로 가기">
          <Glyph size={26} box={26}>
            <path d="M3 12V6Q3 4 5 4H21Q24 4 24 7V21Q24 24 21 24H14M3 9H24M8.500 1V6M18.500 1V6M1.500 19.500H10M6.500 15.500L10.500 19.500L6.500 23.500" />
          </Glyph>
        </button>
        <span className="ml-auto text-[17px]">21:33:22 UTC+9</span>
      </div>
    </section>
  );
}

function BottomPanel() {
  return (
    <section className="flex h-[45px] items-center rounded-t-[5px] bg-[#0f0f0f] pb-px pl-[19px] pr-[11px] text-base text-[#dcdcdc]">
      <button className="w-[80px] whitespace-nowrap text-left">Pine 에디터</button>
      <button className="ml-10 whitespace-nowrap">트레이딩패널</button>
      <button className="ml-auto" aria-label="패널 열기">
        <Glyph size={24} box={24}>
          <path d="M1.500 16.500L12 7L22.500 16.500" />
        </Glyph>
      </button>
      <button className="ml-[18px]" aria-label="패널 최대화">
        <Glyph size={24} box={24}>
          <path d="M2.500 9V5Q2.500 3 4.500 3H19.500Q21.500 3 21.500 5V9M21.500 15V19Q21.500 21 19.500 21H4.500Q2.500 21 2.500 19V15" />
        </Glyph>
      </button>
    </section>
  );
}

function BrowserFooter() {
  return (
    <footer className="relative flex h-[97px] items-start justify-between bg-[#1f1f1f] px-[29px] pt-[22px] text-white">
      <button aria-label="뒤로">
        <Glyph size={24} box={24}>
          <path d="M18 0.500L6.500 12L18 23.500" strokeWidth="3" />
        </Glyph>
      </button>
      <button className="text-[#6d6d6d]" aria-label="앞으로">
        <Glyph size={24} box={24}>
          <path d="M5.500 1L16.500 12L5.500 23" strokeWidth="2.600" />
        </Glyph>
      </button>
      <button aria-label="홈">
        <Glyph size={24} box={24}>
          <path d="M2.500 22.500V9.500L12 2L21.500 9.500V22.500H14.500V15.500H9.500V22.500Z" strokeWidth="2.200" />
        </Glyph>
      </button>
      <button className="size-6 rounded-[4px] border-2 border-white text-[13px] font-semibold leading-5" aria-label="탭 2개">2</button>
      <svg className="absolute bottom-[4px] right-[4px]" width="32" height="32" viewBox="0 0 32 32" aria-hidden="true">
        <path d="M28 2Q25 21 4 27" fill="none" stroke="#fff" strokeWidth="4" strokeLinecap="round" />
      </svg>
    </footer>
  );
}

function BrowserWindow() {
  return (
    <main className="relative mx-[126px] flex flex-1 flex-col overflow-hidden rounded-[44px]">
      <BrowserHeader />
      <TopToolbar />
      <div className="flex flex-1 gap-[5px] bg-[#2e2e2e] pt-[5px]">
        <DrawingRail />
        <div className="flex min-w-0 flex-1 flex-col gap-[5px]">
          <ChartPanel />
          <BottomPanel />
        </div>
        <SideRail />
      </div>
      <BrowserFooter />
    </main>
  );
}

const PETALS = ['#f28a1e', '#f5c22e', '#8cc63f', '#3ea66b', '#3f86e0', '#8a62cf', '#dd4fae', '#ee5a52'];

function Photos({ size }: { size: number }) {
  return (
    <svg width={size} height={size} viewBox="-40 -40 80 80" aria-hidden="true">
      {PETALS.map((c, i) => (
        <rect key={c} x="-9" y="-32" width="18" height="27" rx="9" fill={c} fillOpacity="0.85" transform={`rotate(${i * 45})`} />
      ))}
      <circle r="4.500" fill="#fff" />
    </svg>
  );
}

function AppIcon({ label, badge, tone, children }: { label: string; badge?: number; tone: string; children?: ReactNode }) {
  return (
    <a href="#" aria-label={label} className={`relative flex size-[81px] shrink-0 items-center justify-center rounded-[20px] ${tone}`}>
      {children}
      {badge && (
        <span className="absolute -right-[14px] -top-[13px] h-[31px] min-w-[31px] rounded-full bg-[#ec4a45] px-[8px] text-center text-[20px] leading-[31px] text-white">{badge}</span>
      )}
    </a>
  );
}

function Dock() {
  return (
    <nav className="relative mx-auto mb-[9px] mt-[10px] flex h-[129px] items-center gap-[24px] rounded-[46px] border border-[#85818c] bg-[#453f4b] px-[21px]">
      <AppIcon label="메시지" badge={257} tone="bg-gradient-to-b from-[#86ec80] to-[#58b94e]">
        <svg width="64" height="66" viewBox="0 0 64 66" aria-hidden="true">
          <defs>
            <linearGradient id="bubble" x1="0" y1="0" x2="0" y2="1">
              <stop offset="0" stopColor="#fff" />
              <stop offset="1" stopColor="#c4eabf" />
            </linearGradient>
          </defs>
          <path d="M32 8C15 8 2 19 2 33C2 42 7 49 13 53Q12 57 6 60Q14 60 20 56Q26 58 32 58C49 58 62 47 62 33S49 8 32 8Z" fill="url(#bubble)" />
        </svg>
      </AppIcon>
      <AppIcon label="Brave" tone="bg-gradient-to-b from-white to-[#e9e9e9]">
        <SiBrave className="size-[71px] text-[#ec4322]" />
      </AppIcon>
      <AppIcon label="Spotify" tone="border border-[#3f3f3f] bg-[#0d0d0d]">
        <FaSpotify className="size-[65px] text-[#4fbe60]" />
      </AppIcon>
      <AppIcon label="Gmail" badge={146} tone="bg-white">
        <svg width="64" height="50" viewBox="0 0 64 50" aria-hidden="true">
          <path d="M1 16L15 24V48H4Q1 48 1 45Z" fill="#4d86ee" />
          <path d="M49 24L63 16V45Q63 48 60 48H49Z" fill="#55a557" />
          <path d="M49 8L54 3Q63 -1 63 8V16L49 27Z" fill="#f2bd33" />
          <path d="M15 8L32 21L49 8V26L32 39L15 26Z" fill="#df4d40" />
          <path d="M15 8L10 3Q1 -1 1 8V16L15 27Z" fill="#bd2c28" />
        </svg>
      </AppIcon>
      <AppIcon label="캘린더" tone="flex-col bg-gradient-to-b from-white to-[#e9e9e9] text-[#1c1c1c]">
        <span className="text-[16px] font-medium leading-[24px]">금요일</span>
        <span className="text-[48px] font-light leading-[48px]">7</span>
      </AppIcon>
      <AppIcon label="사진" tone="bg-gradient-to-b from-white to-[#ececec]">
        <Photos size={80} />
      </AppIcon>
      <AppIcon label="메모" tone="overflow-hidden bg-gradient-to-b from-white to-[#e6e6e6]">
        <span className="flex h-full w-full flex-col items-center">
          <span className="h-[20px] w-full bg-[#f9d95a]" />
          <span className="mt-[2px] w-full border-t-2 border-dotted border-[#bdbdbd]" />
          <span className="mt-[16px] h-px w-[62px] bg-[#b5b5b5]" />
          <span className="mt-[19px] h-px w-[62px] bg-[#b5b5b5]" />
        </span>
      </AppIcon>
      <span className="h-[84px] w-px bg-[#77737d]" />
      <AppIcon label="Google" badge={2} tone="bg-white">
        <FcGoogle className="size-[62px]" />
      </AppIcon>
      <AppIcon label="카카오톡" badge={457} tone="bg-[#f6e24a]">
        <svg width="66" height="62" viewBox="0 0 66 62" aria-hidden="true">
          <path d="M33 4C15 4 2 14 2 28C2 38 8 45 17 49L13 60Q14 61 15 60L27 52Q30 52.500 33 52.500C51 52.500 64 42 64 28S51 4 33 4Z" fill="#371e1c" />
          <text x="33" y="36" textAnchor="middle" fontSize="19" fontWeight="800" fill="#f6e24a">TALK</text>
        </svg>
      </AppIcon>
      <AppIcon label="Instagram" badge={11} tone="bg-[radial-gradient(circle_at_25%_105%,#f7d047_0%,#f28a2c_25%,#e9384f_50%,#d52fa8_75%,#6a2cf0_110%)]">
        <svg width="62" height="62" viewBox="0 0 62 62" fill="none" stroke="#fff" strokeWidth="5" aria-hidden="true">
          <rect x="3.500" y="3.500" width="55" height="55" rx="15" />
          <circle cx="31" cy="31" r="13" />
          <circle cx="47.500" cy="15" r="3.500" fill="#fff" stroke="none" />
        </svg>
      </AppIcon>
      <span className="h-[84px] w-px bg-[#77737d]" />
      <div className="relative">
        <span className="absolute -left-[11px] top-[9px] h-[63px] w-[60px] rounded-[20px] border border-[#aaa4b4] bg-[#655e70]" />
        <span className="absolute -left-[6px] top-[5px] h-[71px] w-[70px] rounded-[20px] border border-[#aaa4b4] bg-[#756e80]" />
        <AppIcon label="앱 보관함" tone="border border-[#b9b3c2] bg-[#8b8497]">
          <span className="grid grid-cols-2 gap-[6px]">
            <span className="flex size-[27px] flex-col items-center gap-[5px] overflow-hidden rounded-[7px] bg-[#f1f1f1]">
              <span className="h-[7px] w-full bg-[#f9d95a]" />
              <span className="h-px w-[20px] bg-[#c9c9c9]" />
              <span className="h-px w-[20px] bg-[#c9c9c9]" />
            </span>
            <span className="flex size-[27px] items-center justify-center rounded-[7px] bg-[#f4f4f4]"><Photos size={27} /></span>
            <span className="flex size-[27px] items-center justify-center rounded-[7px] bg-[#f4f4f4]"><SiOpenai className="size-[20px] text-black" /></span>
            <span className="flex size-[27px] items-center justify-center rounded-[7px] bg-gradient-to-b from-[#4fa9f3] to-[#2f62e6] text-white">
              <Glyph size={22} box={22}>
                <path d="M12.500 2.500L6.500 13M4.500 16.500L3.500 18.500M9.500 2.500L18.500 18.500M2.500 14H14M17 14H19.500" strokeWidth="2" strokeLinecap="round" />
              </Glyph>
            </span>
          </span>
        </AppIcon>
      </div>
    </nav>
  );
}

export default function App() {
  return (
    <div className="relative flex min-h-screen w-full flex-col overflow-hidden bg-black font-['Inter','Noto_Sans_CJK_KR',sans-serif]">
      <Wallpaper />
      <NotesWindow />
      <StatusBar />
      <BrowserWindow />
      <svg className="absolute right-[79px] top-[120px]" width="16" height="21" viewBox="0 0 16 21" aria-hidden="true">
        <path d="M1 1.500Q2 0 4 2L15 14Q16 16 13 16H8L3 20Q1 21 1 18Z" fill="#a3a1a6" />
      </svg>
      <Dock />
    </div>
  );
}
